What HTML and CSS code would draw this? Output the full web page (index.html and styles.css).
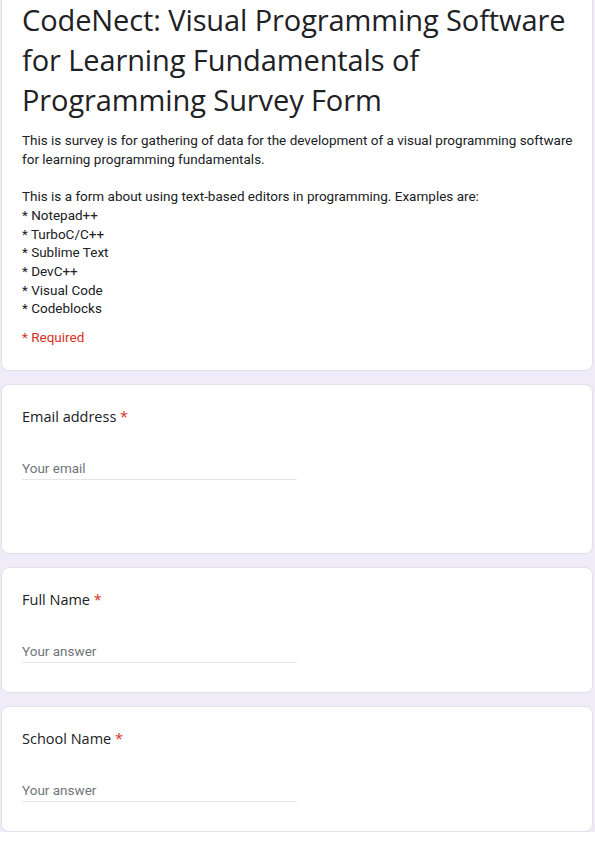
FILE: index.html
```html
<!DOCTYPE html>
<html lang="en">
<head>
<meta charset="utf-8">
<title>CodeNect Survey Form</title>
<link rel="stylesheet" href="styles.css">
</head>
<body>
<main class="form">
  <section class="card card-header">
    <h1 class="title">CodeNect: Visual Programming Software for Learning Fundamentals of Programming Survey Form</h1>
    <div class="desc">
      <p>This is survey is for gathering of data for the development of a visual programming software for learning programming fundamentals.</p>
      <p class="spaced">This is a form about using text-based editors in programming. Examples are:<br>* Notepad++<br>* TurboC/C++<br>* Sublime Text<br>* DevC++<br>* Visual Code<br>* Codeblocks</p>
    </div>
    <div class="required-note">* Required</div>
  </section>

  <section class="card card-question card-email">
    <div class="label">Email address <span class="star">*</span></div>
    <div class="field"><span class="placeholder">Your email</span></div>
  </section>

  <section class="card card-question">
    <div class="label">Full Name <span class="star">*</span></div>
    <div class="field"><span class="placeholder">Your answer</span></div>
  </section>

  <section class="card card-question">
    <div class="label">School Name <span class="star">*</span></div>
    <div class="field"><span class="placeholder">Your answer</span></div>
  </section>
</main>
</body>
</html>
```

FILE: styles.css
```css
* { box-sizing: border-box; }
html, body { margin: 0; padding: 0; background: #ffffff; }
body { width: 595px; height: 842px; overflow: hidden; }

.form {
  background: #f0ebf8;
  display: flex;
  flex-direction: column;
  gap: 13px;
  padding: 0 2px 0 1px;
}

.card {
  background: #ffffff;
  border: 1px solid #e3e1e8;
  border-radius: 8px;
  padding: 0 14px 0 20px;
}

.card-header {
  border-top: none;
  border-top-left-radius: 0;
  border-top-right-radius: 0;
  padding-top: 0;
  padding-bottom: 23px;
}

.title {
  margin: 0;
  font-family: "Open Sans", "Liberation Sans", sans-serif;
  font-weight: 400;
  font-size: 29px;
  line-height: 40px;
  letter-spacing: -0.1px;
  color: #202124;
}

.desc {
  margin-top: 11px;
  font-family: Roboto, "Liberation Sans", sans-serif;
  font-size: 13.5px;
  line-height: 18.7px;
  color: #202124;
}
.desc p { margin: 0; }
.desc .spaced { margin-top: 18.7px; }

.required-note {
  margin-top: 10px;
  font-family: Roboto, "Liberation Sans", sans-serif;
  font-size: 13.5px;
  line-height: 18.7px;
  color: #d93025;
}

.card-question {
  padding-top: 22px;
  padding-bottom: 29px;
}
.card-email { padding-bottom: 73px; }

.label {
  font-family: "Open Sans", "Liberation Sans", sans-serif;
  font-size: 14.5px;
  line-height: 20px;
  color: #202124;
}
.star { color: #d93025; }

.field {
  margin-top: 31px;
  width: 275px;
  border-bottom: 1px solid #e6e6e6;
  padding-bottom: 1px;
}
.placeholder {
  display: block;
  font-family: Roboto, "Liberation Sans", sans-serif;
  font-size: 13.5px;
  line-height: 20px;
  color: #70757a;
}
```
